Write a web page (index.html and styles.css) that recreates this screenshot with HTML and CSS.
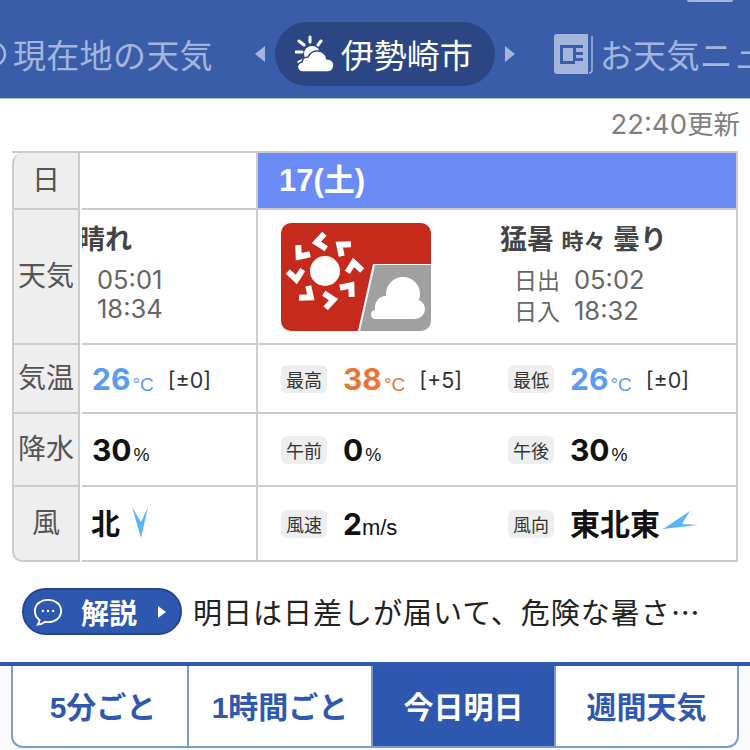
FILE: index.html
```html
<!DOCTYPE html>
<html lang="ja">
<head>
    <meta charset="UTF-8">
    <meta name="viewport" content="width=device-width, initial-scale=1.0">
    <title>伊勢崎市の天気</title>
    <link rel="stylesheet" href="styles.css">
</head>
<body>

    <!-- header tabs -->
    <div class="header">
        <span class="notch"></span>
        <div class="tab tab-here">
            <svg class="here-icon" viewBox="0 0 26 26"><circle cx="13" cy="13" r="11" fill="none" stroke="#a3b5da" stroke-width="2.5"/><circle cx="13" cy="13" r="4" fill="#a3b5da"/></svg>
            <span>現在地の天気</span>
        </div>
        <span class="arrow arrow-left"></span>
        <div class="tab-current">
            <svg class="current-icon" viewBox="0 0 40 38">
                <g stroke="#fff" stroke-width="3" stroke-linecap="round">
                    <path d="M15 2v5M4 6l5 4M26 6l-3 4M1 17h6M4 27l4-2"/>
                </g>
                <circle cx="17" cy="19" r="8" fill="#fff"/>
                <path d="M8 37a5 5 0 0 1-1-10 6 6 0 0 1 6-5 10 10 0 0 1 19 2 6.500 6.500 0 0 1 1 13z" fill="#fff" stroke="#2c4684" stroke-width="1.500"/>
            </svg>
            <span>伊勢崎市</span>
        </div>
        <span class="arrow arrow-right"></span>
        <div class="tab tab-news">
            <svg class="news-icon" viewBox="0 0 40 40">
                <path d="M3 0h31v40H3a3 3 0 0 1-3-3V3a3 3 0 0 1 3-3z" fill="#a3b5da"/>
                <path d="M38 2v34a3 3 0 0 1-3 3" fill="none" stroke="#a3b5da" stroke-width="1.500"/>
                <path d="M6 11h23v3H6zM6 14h3v16H6zM6 27h15v3H6zM19 14h3v13h-3zM22 18h7v3h-7zM22 24h7v3h-7z" fill="#3a5daa"/>
            </svg>
            <span>お天気ニュース</span>
        </div>
    </div>

    <div class="updated"><span class="updated-time">22:40</span>更新</div>

    <!-- forecast table -->
    <div class="forecast">
        <div class="row row-date">
            <div class="label">日</div>
            <div class="today"></div>
            <div class="next date-title">17(土)</div>
        </div>

        <div class="row row-weather">
            <div class="label">天気</div>
            <div class="today today-weather">
                <div class="weather-name name-clipped">晴れ</div>
                <div class="sun-times">
                    <p>05:01</p>
                    <p>18:34</p>
                </div>
            </div>
            <div class="next next-weather">
                <svg class="weather-icon" viewBox="0 0 150 108">
                    <path d="M10 0h130a10 10 0 0 1 10 10v31H92L77 108H10A10 10 0 0 1 0 98V10A10 10 0 0 1 10 0z" fill="#c52a1c"/>
                    <path d="M94 42h56v56a10 10 0 0 1-10 10H79z" fill="#a0a0a0"/>
                    <circle cx="44" cy="48" r="15" fill="#fff"/>
                    <g fill="none" stroke="#fff" stroke-width="6" transform="translate(44 48)">
                        <path d="M4-37-5-29.500 4-22" transform="rotate(-7)"/>
                        <path d="M4-37-5-29.500 4-22" transform="rotate(38)"/>
                        <path d="M4-37-5-29.500 4-22" transform="rotate(83)"/>
                        <path d="M4-37-5-29.500 4-22" transform="rotate(128)"/>
                        <path d="M4-37-5-29.500 4-22" transform="rotate(173)"/>
                        <path d="M4-37-5-29.500 4-22" transform="rotate(218)"/>
                        <path d="M4-37-5-29.500 4-22" transform="rotate(263)"/>
                        <path d="M4-37-5-29.500 4-22" transform="rotate(308)"/>
                    </g>
                    <g fill="#fff">
                        <circle cx="94.500" cy="91.500" r="4.500"/>
                        <circle cx="105" cy="84" r="11"/>
                        <circle cx="122" cy="71" r="17"/>
                        <circle cx="134" cy="86" r="10"/>
                        <rect x="94" y="84" width="40" height="12"/>
                    </g>
                </svg>
                <div class="weather-text">
                    <div class="weather-name">猛暑 <small>時々</small> 曇り</div>
                    <div class="sun-times">
                        <p><span class="sun-label">日出</span>05:02</p>
                        <p><span class="sun-label">日入</span>18:32</p>
                    </div>
                </div>
            </div>
        </div>

        <div class="row row-temp">
            <div class="label">気温</div>
            <div class="today"><b class="num cold">26</b><span class="unit cold">°C</span><span class="diff">[±0]</span></div>
            <div class="next pairs">
                <div class="pair"><span class="tag">最高</span><b class="num hot">38</b><span class="unit hot">°C</span><span class="diff">[+5]</span></div>
                <div class="pair"><span class="tag">最低</span><b class="num cold">26</b><span class="unit cold">°C</span><span class="diff">[±0]</span></div>
            </div>
        </div>

        <div class="row row-rain">
            <div class="label">降水</div>
            <div class="today"><b class="num">30</b><span class="unit-pct">%</span></div>
            <div class="next pairs">
                <div class="pair"><span class="tag">午前</span><b class="num">0</b><span class="unit-pct">%</span></div>
                <div class="pair"><span class="tag">午後</span><b class="num">30</b><span class="unit-pct">%</span></div>
            </div>
        </div>

        <div class="row row-wind">
            <div class="label">風</div>
            <div class="today">
                <b class="num-jp">北</b>
                <svg class="wind-north" viewBox="0 0 17 31"><path d="M0 0 9 15 16 0 9 31z" fill="#5cb5f5"/></svg>
            </div>
            <div class="next pairs">
                <div class="pair"><span class="tag">風速</span><b class="num">2</b><span class="unit-speed">m/s</span></div>
                <div class="pair">
                    <span class="tag">風向</span><b class="num-jp">東北東</b>
                    <svg class="wind-ene" viewBox="0 0 35 20"><path d="M0 18 27 0 19 13 35 14z" fill="#5cb5f5"/></svg>
                </div>
            </div>
        </div>
    </div>

    <!-- comment -->
    <div class="comment">
        <div class="comment-btn">
            <svg class="comment-icon" viewBox="0 0 32 32">
                <path d="M16 3C8 3 2 8 2 15c0 4 2 7.500 5 9.500 0 2-1 3.500-2 5 3 0 6-1.500 8-3 1 .2 2 .3 3 .3 8 0 14-5 14-11.800S24 3 16 3z" fill="none" stroke="#fff" stroke-width="2"/>
                <circle cx="10.500" cy="15" r="1.300" fill="#fff"/><circle cx="16" cy="15" r="1.300" fill="#fff"/><circle cx="21.500" cy="15" r="1.300" fill="#fff"/>
            </svg>
            <span>解説</span>
            <i class="comment-arrow"></i>
        </div>
        <p class="comment-text">明日は日差しが届いて、危険な暑さ…</p>
    </div>

    <!-- bottom tabs -->
    <div class="bottom-bar">
        <div class="bottom-tabs">
            <a class="bottom-tab first">5分ごと</a>
            <a class="bottom-tab">1時間ごと</a>
            <a class="bottom-tab active">今日明日</a>
            <a class="bottom-tab">週間天気</a>
        </div>
    </div>

</body>
</html>
```

FILE: styles.css
```css
html, body {
    margin: 0;
    padding: 0;
}

body {
    width: 750px;
    height: 750px;
    overflow: hidden;
    position: relative;
    background-color: #ffffff;
    color: #444;
    font-family: "Liberation Sans", "Noto Sans CJK JP", sans-serif;
}

p {
    margin: 0;
}

/* header tabs */
.header {
    height: 99px;
    box-sizing: border-box;
    padding-top: 9px;
    display: flex;
    align-items: center;
    background-color: #3a5daa;
    border-bottom: 1px solid #a9b6d8;
    overflow: hidden;
    white-space: nowrap;
    position: relative;
}

.notch {
    position: absolute;
    top: 0;
    right: 17px;
    width: 46px;
    height: 2px;
    background-color: #a3b5da;
    border-radius: 0 0 3px 3px;
}

.tab {
    display: flex;
    align-items: center;
    flex-shrink: 0;
    font-size: 33px;
    letter-spacing: 0.300px;
    color: #a3b5da;
}

.tab-here {
    margin-left: -19px;
}

.here-icon {
    width: 26px;
    height: 26px;
    margin-right: 6px;
}

.arrow {
    flex-shrink: 0;
    width: 0;
    height: 0;
    border-top: 8px solid transparent;
    border-bottom: 8px solid transparent;
}

.arrow-left {
    margin: 0 10px 0 42px;
    border-right: 10px solid #a3b5da;
}

.arrow-right {
    margin: 0 39px 0 10px;
    border-left: 10px solid #a3b5da;
}

.tab-current {
    display: flex;
    align-items: center;
    flex-shrink: 0;
    width: 220px;
    height: 64px;
    box-sizing: border-box;
    padding-left: 20px;
    border-radius: 32px;
    background-color: #2c4684;
    color: #ffffff;
    font-size: 33px;
}

.current-icon {
    width: 40px;
    height: 38px;
    margin-right: 6px;
}

.news-icon {
    width: 40px;
    height: 40px;
    margin-right: 6px;
}

.updated {
    margin: 9px 10px 10px 0;
    text-align: right;
    font-size: 26.500px;
    line-height: 32px;
    color: #808080;
}

.updated-time {
    font-family: "Inter", sans-serif;
    font-size: 27.500px;
}

/* forecast table */
.forecast {
    margin: 0 12px;
    width: 726px;
    border-top: 2px solid #cccccc;
}

.row {
    display: grid;
    grid-template-columns: 68px 176px 1fr;
    column-gap: 2px;
}

.row-date { height: 57px; }
.row-weather { height: 135px; }
.row-temp { height: 69px; }
.row-rain { height: 73px; }
.row-wind { height: 75px; }

.label {
    display: flex;
    align-items: center;
    justify-content: center;
    padding-bottom: 5px;
    background-color: #eeeeee;
    border: solid #cccccc;
    border-width: 0 2px 2px 2px;
    font-size: 28px;
    color: #555;
}

.row-date .label {
    border-top-left-radius: 10px;
}

.row-wind .label {
    border-bottom-left-radius: 10px;
}

.today {
    display: flex;
    align-items: center;
    padding-left: 10px;
    border-bottom: 2px solid #cccccc;
    border-right: 2px solid #cccccc;
}

.next {
    margin-left: -2px;
    border-bottom: 2px solid #cccccc;
    border-right: 2px solid #cccccc;
}

.date-title {
    display: flex;
    align-items: center;
    padding: 0 0 6px 21px;
    background-color: #6b8cf7;
    color: #ffffff;
    font-size: 31px;
    font-weight: bold;
}

.today-weather {
    display: block;
    padding: 0;
    overflow: hidden;
}

.weather-name {
    font-size: 27px;
    line-height: 36px;
    font-weight: bold;
    color: #444;
    white-space: nowrap;
}

.weather-name small {
    font-size: 22px;
}

.name-clipped {
    margin: 12px 0 0 -4px;
}

.sun-times {
    margin-top: 7px;
    font-family: "Inter", "Noto Sans CJK JP", sans-serif;
    font-size: 25.500px;
    line-height: 29px;
    color: #666;
}

.today-weather .sun-times {
    padding-left: 15px;
}

.next-weather {
    display: flex;
    padding: 13px 0 0 23px;
}

.weather-icon {
    width: 150px;
    height: 108px;
    margin-right: 69px;
}

.weather-text .weather-name {
    margin-top: -1px;
}

.weather-text .sun-times {
    margin-top: 5px;
    padding-left: 14px;
}

.sun-label {
    font-size: 23px;
    margin-right: 14px;
}

.pairs {
    display: grid;
    grid-template-columns: 227px 1fr;
    padding-left: 23px;
}

.pair {
    display: flex;
    align-items: center;
}

.tag {
    width: 46px;
    height: 28px;
    margin-right: 16px;
    flex-shrink: 0;
    display: flex;
    align-items: center;
    justify-content: center;
    background-color: #eeeeee;
    border-radius: 6px;
    font-size: 18px;
    color: #333;
}

.num {
    font-family: "Inter", sans-serif;
    font-size: 30px;
    color: #111;
}

.num-jp {
    margin-bottom: 4px;
    font-size: 30px;
    color: #111;
}

.today .num-jp {
    margin-left: -1px;
    font-size: 29px;
}

.num.cold,
.cold {
    color: #5a9cf0;
}

.num.hot,
.hot {
    color: #e97631;
}

.unit {
    margin: 12px 0 0 2px;
    font-size: 19px;
}

.unit-pct {
    margin: 11px 0 0 2px;
    font-size: 18px;
    color: #111;
}

.unit-speed {
    margin-top: 8px;
    font-size: 22px;
    color: #111;
}

.diff {
    margin: 3px 0 0 14px;
    font-family: "Inter", sans-serif;
    font-size: 21.500px;
    color: #333;
}

.wind-north {
    width: 17px;
    height: 31px;
    margin: -2px 0 0 12px;
}

.wind-ene {
    width: 35px;
    height: 20px;
    margin: -6px 0 0 3px;
}

/* comment */
.comment {
    display: flex;
    align-items: center;
    margin: 26px 0 0 22px;
}

.comment-btn {
    display: flex;
    align-items: center;
    width: 160px;
    height: 47px;
    box-sizing: border-box;
    padding-left: 9px;
    background-color: #2e58b0;
    border: 2px solid #23468f;
    border-radius: 24px;
    color: #ffffff;
    font-size: 28px;
    font-weight: bold;
}

.comment-icon {
    width: 30px;
    height: 30px;
    margin-right: 18px;
}

.comment-arrow {
    width: 0;
    height: 0;
    margin-left: 21px;
    border-top: 6px solid transparent;
    border-bottom: 6px solid transparent;
    border-left: 8px solid #ffffff;
}

.comment-text {
    margin: 0 0 2px 11px;
    font-family: "Noto Sans CJK JP", sans-serif;
    font-size: 29px;
    letter-spacing: 1px;
    color: #222;
    white-space: nowrap;
}

/* bottom tabs */
.bottom-bar {
    position: absolute;
    left: 0;
    right: 0;
    bottom: 0;
    height: 88px;
    padding: 0 11px 2px;
    box-sizing: border-box;
    background-color: #fafafa;
    border-top: 4px solid #2f59b0;
}

.bottom-tabs {
    display: grid;
    grid-template-columns: 176px 184px 183px 1fr;
    height: 100%;
    box-sizing: border-box;
    border: 2px solid #7d9ace;
    border-top: none;
    border-radius: 0 0 12px 12px;
    background-color: #ffffff;
    overflow: hidden;
}

.bottom-tab {
    display: flex;
    align-items: center;
    justify-content: center;
    padding-bottom: 3px;
    border-right: 2px solid #7d9ace;
    font-size: 30px;
    font-weight: bold;
    color: #2f59b0;
}

.bottom-tab.first {
    padding-left: 6px;
}

.bottom-tab:last-child {
    border-right: none;
}

.bottom-tab.active {
    background-color: #2e58b0;
    color: #ffffff;
}
```
